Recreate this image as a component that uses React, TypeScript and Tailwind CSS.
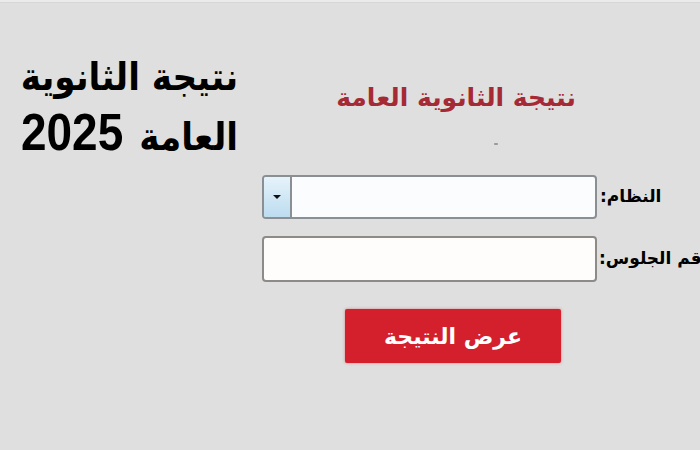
import React from "react";

export default function App() {
  return (
    <div className="w-[700px] h-[450px] bg-[#dfdfdf] overflow-hidden flex flex-col" style={{ fontFamily: '"DejaVu Sans", "Liberation Sans", sans-serif' }}>
      <div className="h-[3px] bg-[#ebebeb] border-b border-[#d6d6d6]" />
      <div className="flex flex-1 min-w-0">
        <div className="w-[262px] shrink-0 pl-[14px] pt-[46px]">
          <div dir="rtl" className="w-[224px] text-right text-black font-bold text-[38px] leading-[56px] whitespace-nowrap scale-x-[0.9] origin-right" style={{ fontFamily: '"DejaVu Sans", "Liberation Sans", sans-serif' }}>
            <div>نتيجة الثانوية</div>
            <div className="flex items-baseline justify-start gap-[18px]">
              <span>العامة</span>
              <span style={{ fontFamily: '"Liberation Sans", Arial, sans-serif' }} className="text-[51px] inline-block">2025</span>
            </div>
          </div>
        </div>
        <div className="flex-1 min-w-0 flex flex-col">
          <div dir="rtl" className="pt-[78px] pl-[73px] w-[315px] text-center font-bold text-[25px] text-[#a52a35] leading-[34px] whitespace-nowrap">
            نتيجة الثانوية العامة
          </div>
          <div className="h-[58px] flex items-center pl-[232px]">
            <div className="w-[4px] h-[2px] bg-[#9a9a9a] rounded-full" />
          </div>
          <div className="flex items-center mt-[2px]">
            <div className="w-[335px] shrink-0 h-[44px] flex border-2 border-[#8a8f94] rounded-[4px] bg-[#fbfcfe] overflow-hidden">
              <div className="w-[28px] bg-gradient-to-b from-[#e6f3fb] to-[#bcdcef] border-r-2 border-[#8a8f94] flex items-center justify-center">
                <svg width="10" height="6" viewBox="0 0 10 6"><path d="M1 1 L9 1 L5 5 Z" fill="#111" /></svg>
              </div>
              <div className="flex-1" />
            </div>
            <div dir="rtl" className="ml-[3px] shrink-0 font-bold text-[17px] text-black whitespace-nowrap">النظام:</div>
          </div>
          <div className="flex items-center mt-[17px]">
            <div className="w-[335px] shrink-0 h-[46px] border-2 border-[#8d8a88] rounded-[4px] bg-[#fffdfc]" />
            <div dir="rtl" className="ml-[2px] shrink-0 font-bold text-[17px] text-black whitespace-nowrap">رقم الجلوس:</div>
          </div>
          <div className="pl-[83px] mt-[27px]">
            <div className="w-[216px] h-[54px] bg-[#d41f2c] rounded-[2px] shadow-[0_0_3px_rgba(200,40,40,0.5)] flex items-center justify-center">
              <span dir="rtl" className="text-white font-bold text-[22px]">عرض النتيجة</span>
            </div>
          </div>
        </div>
      </div>
    </div>
  );
}
